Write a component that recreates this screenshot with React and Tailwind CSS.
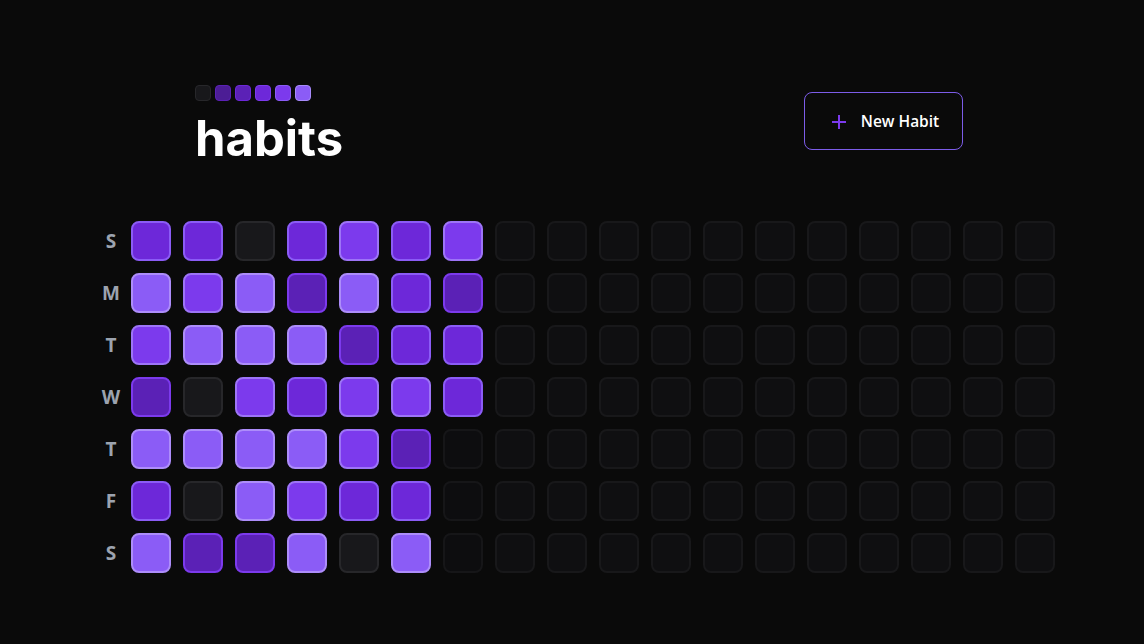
import React from "react";

const LEVEL = {
  0: "bg-[#18181b] border-[#27272a]",
  1: "bg-[#5b21b6] border-[#7c3aed]",
  2: "bg-[#6d28d9] border-[#8b5cf6]",
  3: "bg-[#7c3aed] border-[#9d74f7]",
  4: "bg-[#8b5cf6] border-[#ad8dfa]",
  F: "bg-[#0f0f11] border-[#18181a]",
  G: "bg-[#0d0d0f] border-[#161618]",
};

const ROWS = [
  { d: "S", v: [2, 2, 0, 2, 3, 2, 3] },
  { d: "M", v: [4, 3, 4, 1, 4, 2, 1] },
  { d: "T", v: [3, 4, 4, 4, 1, 2, 2] },
  { d: "W", v: [1, 0, 3, 2, 3, 3, 2] },
  { d: "T", v: [4, 4, 4, 4, 3, 1, "G"] },
  { d: "F", v: [2, 0, 4, 3, 2, 2, "G"] },
  { d: "S", v: [4, 1, 1, 4, 0, 4, "G"] },
];

const LEGEND = [
  "bg-[#18181b] border-[#27272a]",
  "bg-[#4c1d95] border-[#5b21b6]",
  "bg-[#5b21b6] border-[#6d28d9]",
  "bg-[#6d28d9] border-[#7c3aed]",
  "bg-[#7c3aed] border-[#8b5cf6]",
  "bg-[#8b5cf6] border-[#a78bfa]",
];

export default function App() {
  return (
    <div className="w-full h-[644px] bg-[#0a0a0a] overflow-hidden">
      <div className="flex flex-col">
        <div className="ml-[195px] w-[768px] pt-[85px] flex items-start justify-between">
          <div className="flex flex-col">
            <div className="flex gap-1">
              {LEGEND.map((c, i) => (
                <div key={i} className={`w-4 h-4 rounded border ${c}`} />
              ))}
            </div>
            <h1
              className="mt-[13px] text-[49px] leading-none font-bold text-white"
              style={{ fontFamily: "Inter, sans-serif" }}
            >
              habits
            </h1>
          </div>
          <button
            className="mt-[7px] w-[159px] h-[58px] rounded-lg border border-[#7c5ce8] flex items-center justify-center gap-[14px] pt-px pl-[3px] text-white text-[15.5px] font-semibold"
            style={{ fontFamily: "'Open Sans', sans-serif" }}
          >
            <svg width="16" height="16" viewBox="0 0 16 16" fill="none">
              <path d="M8 1v14M1 8h14" stroke="#7c3aed" strokeWidth="2" />
            </svg>
            New Habit
          </button>
        </div>

        <div className="ml-[99px] mt-[58px] flex flex-col gap-3">
          {ROWS.map((r, ri) => {
            const vals = [...r.v];
            while (vals.length < 18) vals.push("F");
            return (
              <div key={ri} className="flex items-center">
                <div
                  className="w-6 mr-2 text-center text-[19px] font-bold text-[#9ca3af]"
                  style={{ fontFamily: "'Open Sans', sans-serif" }}
                >
                  {r.d}
                </div>
                <div className="flex gap-3">
                  {vals.map((v, i) => (
                    <div
                      key={i}
                      className={`w-10 h-10 rounded-lg border-2 ${LEVEL[v]}`}
                    />
                  ))}
                </div>
              </div>
            );
          })}
        </div>
      </div>
    </div>
  );
}
